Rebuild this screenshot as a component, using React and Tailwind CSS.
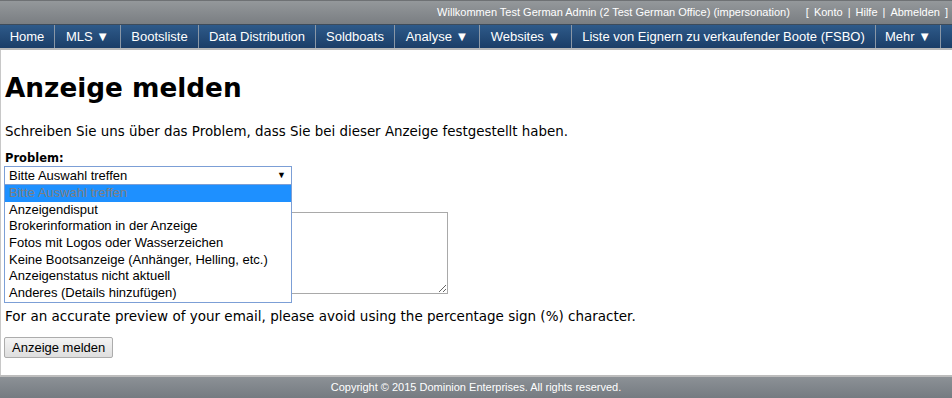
const navItems = [
  { label: "Home", w: "w-[55px]" },
  { label: "MLS ▼", w: "w-[66px]" },
  { label: "Bootsliste", w: "w-[78px]" },
  { label: "Data Distribution", w: "w-[117px]" },
  { label: "Soldboats", w: "w-[79px]" },
  { label: "Analyse ▼", w: "w-[85px]" },
  { label: "Websites ▼", w: "w-[92px]" },
  { label: "Liste von Eignern zu verkaufender Boote (FSBO)", w: "w-[304px]" },
  { label: "Mehr ▼", w: "w-[65px]" },
];

const options = [
  "Bitte Auswahl treffen",
  "Anzeigendisput",
  "Brokerinformation in der Anzeige",
  "Fotos mit Logos oder Wasserzeichen",
  "Keine Bootsanzeige (Anhänger, Helling, etc.)",
  "Anzeigenstatus nicht aktuell",
  "Anderes (Details hinzufügen)",
];

export default function App() {
  return (
    <div className="min-h-[398px] flex flex-col bg-white font-['Liberation_Sans',Arial,sans-serif]">
      {/* top bar */}
      <div className="h-6 flex items-center justify-end pr-[4px] border-t border-[#6e7174] bg-gradient-to-b from-[#94989b] to-[#7a7e82] text-[11px] text-white">
        <span>Willkommen Test German Admin (2 Test German Office) (impersonation)</span>
        <div className="ml-[16px] flex gap-[5px]">
          <span>[</span>
          <span>Konto</span>
          <span>|</span>
          <span>Hilfe</span>
          <span>|</span>
          <span>Abmelden</span>
          <span>]</span>
        </div>
      </div>

      {/* nav */}
      <nav className="h-[26px] flex border-t border-[#3d4b5a] border-b-2 border-b-[#b8b8b8] bg-gradient-to-b from-[#2e5a8a] to-[#1b3e68] text-[13px] text-white">
        {navItems.map((item) => (
          <div
            key={item.label}
            className={`${item.w} shrink-0 flex items-center justify-center border-r border-[#8a97a6]`}
          >
            {item.label}
          </div>
        ))}
      </nav>

      {/* content */}
      <main className="flex-1 border-l border-[#c8c8c8] px-[4px] pt-[22px] text-black font-['DejaVu_Sans',Verdana,sans-serif]">
        <h1 className="text-[26.3px] font-bold leading-[32px]">Anzeige melden</h1>
        <p className="mt-[20px] text-[13.4px] leading-[16px]">
          Schreiben Sie uns über das Problem, dass Sie bei dieser Anzeige festgestellt haben.
        </p>
        <div className="mt-[10px] text-[11.5px] font-bold leading-[16px]">Problem:</div>

        <div className="relative -ml-[1px] w-[288px]">
          <div className="h-[19px] flex items-center justify-between pl-[4px] pr-[5px] border border-[#7c9fd6] bg-white font-['Liberation_Sans',Arial,sans-serif] text-[13px]">
            <span>Bitte Auswahl treffen</span>
            <span className="text-[9px]">▼</span>
          </div>
          <ul className="absolute left-0 top-full z-10 w-full border border-[#7c9fd6] border-t-0 bg-white font-['Liberation_Sans',Arial,sans-serif] text-[13px]">
            {options.map((o, i) => (
              <li
                key={o}
                className={`h-[16.7px] leading-[16.7px] pl-[4px] ${
                  i === 0 ? "bg-[#1e90ff] text-[#7f7f7f]" : "text-black"
                }`}
              >
                {o}
              </li>
            ))}
          </ul>
        </div>

        <textarea className="block mt-[27px] -ml-[1px] w-[444px] h-[82px] border border-[#a9a9a9] bg-white" />

        <p className="mt-[14px] text-[13.5px] leading-[16px]">
          For an accurate preview of your email, please avoid using the percentage sign (%) character.
        </p>

        <button className="mt-[13px] -ml-[1px] h-[21px] px-[7px] border border-[#acacac] rounded-[2px] bg-gradient-to-b from-[#f4f4f4] to-[#dedede] text-[13px] leading-[19px] font-['Liberation_Sans',Arial,sans-serif] text-black">
          Anzeige melden
        </button>
      </main>

      {/* footer */}
      <footer className="h-[23px] flex items-center justify-center border-t-2 border-[#bdbdbd] bg-gradient-to-b from-[#8c9196] to-[#757b81] text-[11px] text-white">
        Copyright © 2015 Dominion Enterprises. All rights reserved.
      </footer>
    </div>
  );
}
